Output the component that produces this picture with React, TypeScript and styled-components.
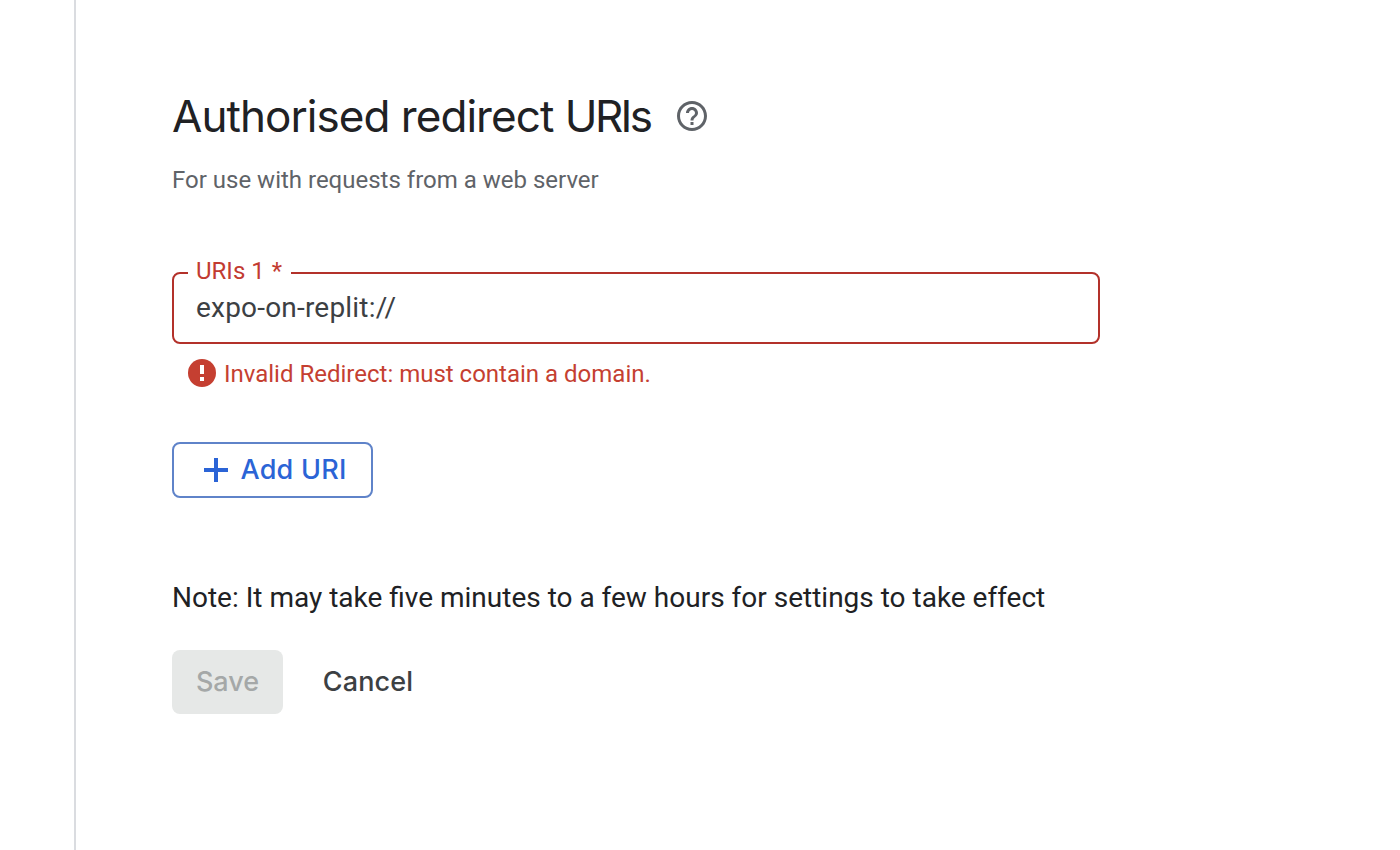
import React from "react";
import styled, { createGlobalStyle } from "styled-components";

const GlobalStyle = createGlobalStyle`
  *, *::before, *::after { box-sizing: border-box; }
  body { margin: 0; background: #fff; font-family: Roboto, "Liberation Sans", sans-serif; }
`;

const display = `Inter, "Liberation Sans", sans-serif`;

const Page = styled.div`
  display: flex;
  height: 850px;
  overflow: hidden;
`;

const Rail = styled.div`
  flex: none;
  width: 76px;
  border-right: 2px solid #dadce0;
`;

const Content = styled.main`
  display: flex;
  flex-direction: column;
  align-items: flex-start;
  padding: 90px 0 0 96px;
`;

const TitleRow = styled.div`
  display: flex;
  align-items: center;
  gap: 25px;
  height: 52px;
`;

const Title = styled.h2`
  margin: 0;
  width: 480px;
  font: 400 44px/52px ${display};
  letter-spacing: -0.95px;
  white-space: nowrap;
  color: #202124;
`;

const Acronym = styled.span`
  letter-spacing: -2.6px;
`;

const Subtitle = styled.p`
  margin: 22px 0 0;
  font-size: 24px;
  line-height: 32px;
  white-space: nowrap;
  color: #5f6368;
`;

const Field = styled.fieldset`
  width: 928px;
  height: 83px;
  margin: 65px 0 0;
  padding: 0 22px 0 14px;
  border: 2px solid #b3312a;
  border-radius: 8px;
`;

const Legend = styled.legend`
  width: 103px;
  height: 24px;
  padding: 0 8px;
  font-size: 24px;
  line-height: 20px;
  white-space: nowrap;
  color: #c23b31;
`;

const Required = styled.span`
  margin-left: 1px;
`;

const Input = styled.input`
  display: block;
  width: 100%;
  height: 46px;
  padding: 0 0 0 8px;
  border: 0;
  outline: 0;
  background: transparent;
  font: 400 28px/46px Roboto, sans-serif;
  letter-spacing: 0.2px;
  color: #3c4043;
`;

const ErrorRow = styled.div`
  display: flex;
  align-items: center;
  gap: 8px;
  height: 28px;
  margin: 15px 0 0 16px;
  white-space: nowrap;
  color: #c53f31;
`;

const ErrorText = styled.span`
  padding-top: 2px;
  font-size: 24px;
  line-height: 28px;
`;

const Button = styled.button<{ $kind: "outlined" | "disabled" | "text" }>`
  display: flex;
  align-items: center;
  justify-content: center;
  padding: 0;
  font: 500 27px/36px ${display};
  white-space: nowrap;
  border-radius: 8px;
  border: ${(p) => (p.$kind === "outlined" ? "2px solid #5f83c9" : "0")};
  background: ${(p) => (p.$kind === "disabled" ? "#e6e8e7" : "transparent")};
  color: ${(p) =>
    p.$kind === "outlined" ? "#2b64d6" : p.$kind === "disabled" ? "#a5a8a8" : "#3c4043"};
`;

const AddButton = styled(Button)`
  width: 201px;
  height: 56px;
  margin-top: 55px;
  gap: 12.5px;
  justify-content: flex-start;
  padding-left: 30px;
  letter-spacing: 0.25px;
`;

const Note = styled.p`
  margin: 82px 0 0;
  font-size: 28px;
  line-height: 36px;
  white-space: nowrap;
  color: #202124;
`;

const Actions = styled.div`
  display: flex;
  gap: 16px;
  margin-top: 34px;
`;

const SaveButton = styled(Button)`
  width: 111px;
  height: 64px;
`;

const CancelButton = styled(Button)`
  width: 138px;
  height: 64px;
  letter-spacing: 0.15px;
`;

const Icon = styled.svg`
  display: block;
  flex: none;
`;

export default function App() {
  return (
    <Page>
      <GlobalStyle />
      <Rail />
      <Content>
        <TitleRow>
          <Title>
            Authorised redirect <Acronym>URIs</Acronym>
          </Title>
          <Icon width="30" height="30" viewBox="2 2 20 20" fill="#5f6368">
            <path d="M11 18h2v-2h-2v2zm1-16C6.48 2 2 6.48 2 12s4.48 10 10 10 10-4.48 10-10S17.52 2 12 2zm0 18c-4.41 0-8-3.59-8-8s3.59-8 8-8 8 3.59 8 8-3.59 8-8 8zm0-14c-2.21 0-4 1.79-4 4h2c0-1.1.9-2 2-2s2 .9 2 2c0 2-3 1.75-3 5h2c0-2.25 3-2.5 3-5 0-2.21-1.79-4-4-4z" />
          </Icon>
        </TitleRow>
        <Subtitle>For use with requests from a web server</Subtitle>
        <Field>
          <Legend>
            URIs 1 <Required>*</Required>
          </Legend>
          <Input defaultValue="expo-on-replit://" spellCheck={false} />
        </Field>
        <ErrorRow>
          <Icon width="28" height="28" viewBox="0 0 28 28">
            <circle cx="14" cy="14" r="14" fill="#c53f31" />
            <path d="M12 6h4v9h-4zM12 18h4v4h-4z" fill="#fff" />
          </Icon>
          <ErrorText>Invalid Redirect: must contain a domain.</ErrorText>
        </ErrorRow>
        <AddButton $kind="outlined">
          <Icon width="24" height="24" viewBox="0 0 24 24">
            <path d="M10 0h4v10h10v4H14v10h-4V14H0v-4h10z" fill="#2b64d6" />
          </Icon>
          <span>Add URI</span>
        </AddButton>
        <Note>Note: It may take five minutes to a few hours for settings to take effect</Note>
        <Actions>
          <SaveButton $kind="disabled" disabled>
            Save
          </SaveButton>
          <CancelButton $kind="text">Cancel</CancelButton>
        </Actions>
      </Content>
    </Page>
  );
}
